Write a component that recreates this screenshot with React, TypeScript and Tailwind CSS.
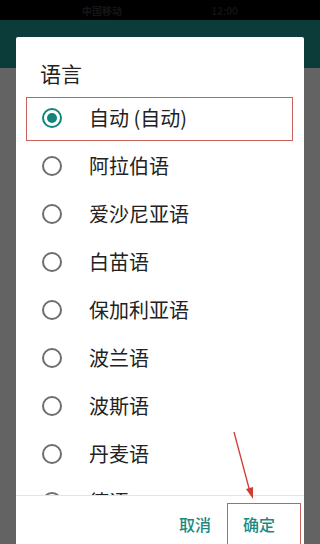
import React from "react";

const langs = ["自动 (自动)", "阿拉伯语", "爱沙尼亚语", "白苗语", "保加利亚语", "波兰语", "波斯语", "丹麦语", "德语"];

function Radio({ checked }: { checked: boolean }) {
  return checked ? (
    <div className="w-[20px] h-[20px] rounded-full border-2 border-[#12857a] flex items-center justify-center shrink-0">
      <div className="w-[10px] h-[10px] rounded-full bg-[#12857a]" />
    </div>
  ) : (
    <div className="w-[20px] h-[20px] rounded-full border-2 border-[#6e6e6e] shrink-0" />
  );
}

export default function App() {
  return (
    <div
      className="relative w-[320px] h-[544px] overflow-hidden bg-[#636363]"
      style={{ fontFamily: '"Noto Sans CJK SC", "Noto Sans", sans-serif' }}
    >
      <div className="h-[20px] bg-black flex items-center justify-between px-[82px] text-[10px] text-[#161616] font-bold">
        <span>中国移动</span>
        <span className="text-[#111]">12:00</span>
      </div>
      <div className="h-[48px] bg-[#0b3c39]" />

      <div className="absolute left-[16px] top-[37px] w-[288px] bottom-0 bg-white rounded-t-[2px] flex flex-col">
        <div className="pt-[22px] pl-[24px] h-[57px] text-[21px] leading-[28px] text-[#222]">语言</div>
        <div className="h-[401px] overflow-hidden">
          {langs.map((l, i) => (
            <div key={l} className="h-[48px] flex items-center pl-[26px] gap-[27px]">
              <Radio checked={i === 0} />
              <span className="text-[20px] text-[#222] leading-none">{l}</span>
            </div>
          ))}
        </div>
        <div className="border-t border-[#e4e4e4] flex justify-end pt-[16px] pr-[13px]">
          <span className="px-[16px] text-[16px] leading-[24px] text-[#1a8a80] font-medium">取消</span>
          <span className="px-[16px] text-[16px] leading-[24px] text-[#1a8a80] font-medium">确定</span>
        </div>
      </div>

      <div className="absolute left-[26px] top-[97px] w-[267px] h-[44px] border-[1.5px] border-[#c9605c]" />
      <div className="absolute left-[227px] top-[503px] w-[74px] h-[50px] border-[1.5px] border-[#c9605c]" />

      <svg className="absolute left-0 top-0" width="320" height="544">
        <line x1="234" y1="432" x2="250" y2="492" stroke="#d33a34" strokeWidth="1.3" />
        <polygon points="246,489 253,499 253,487" fill="#d33a34" />
      </svg>
    </div>
  );
}
